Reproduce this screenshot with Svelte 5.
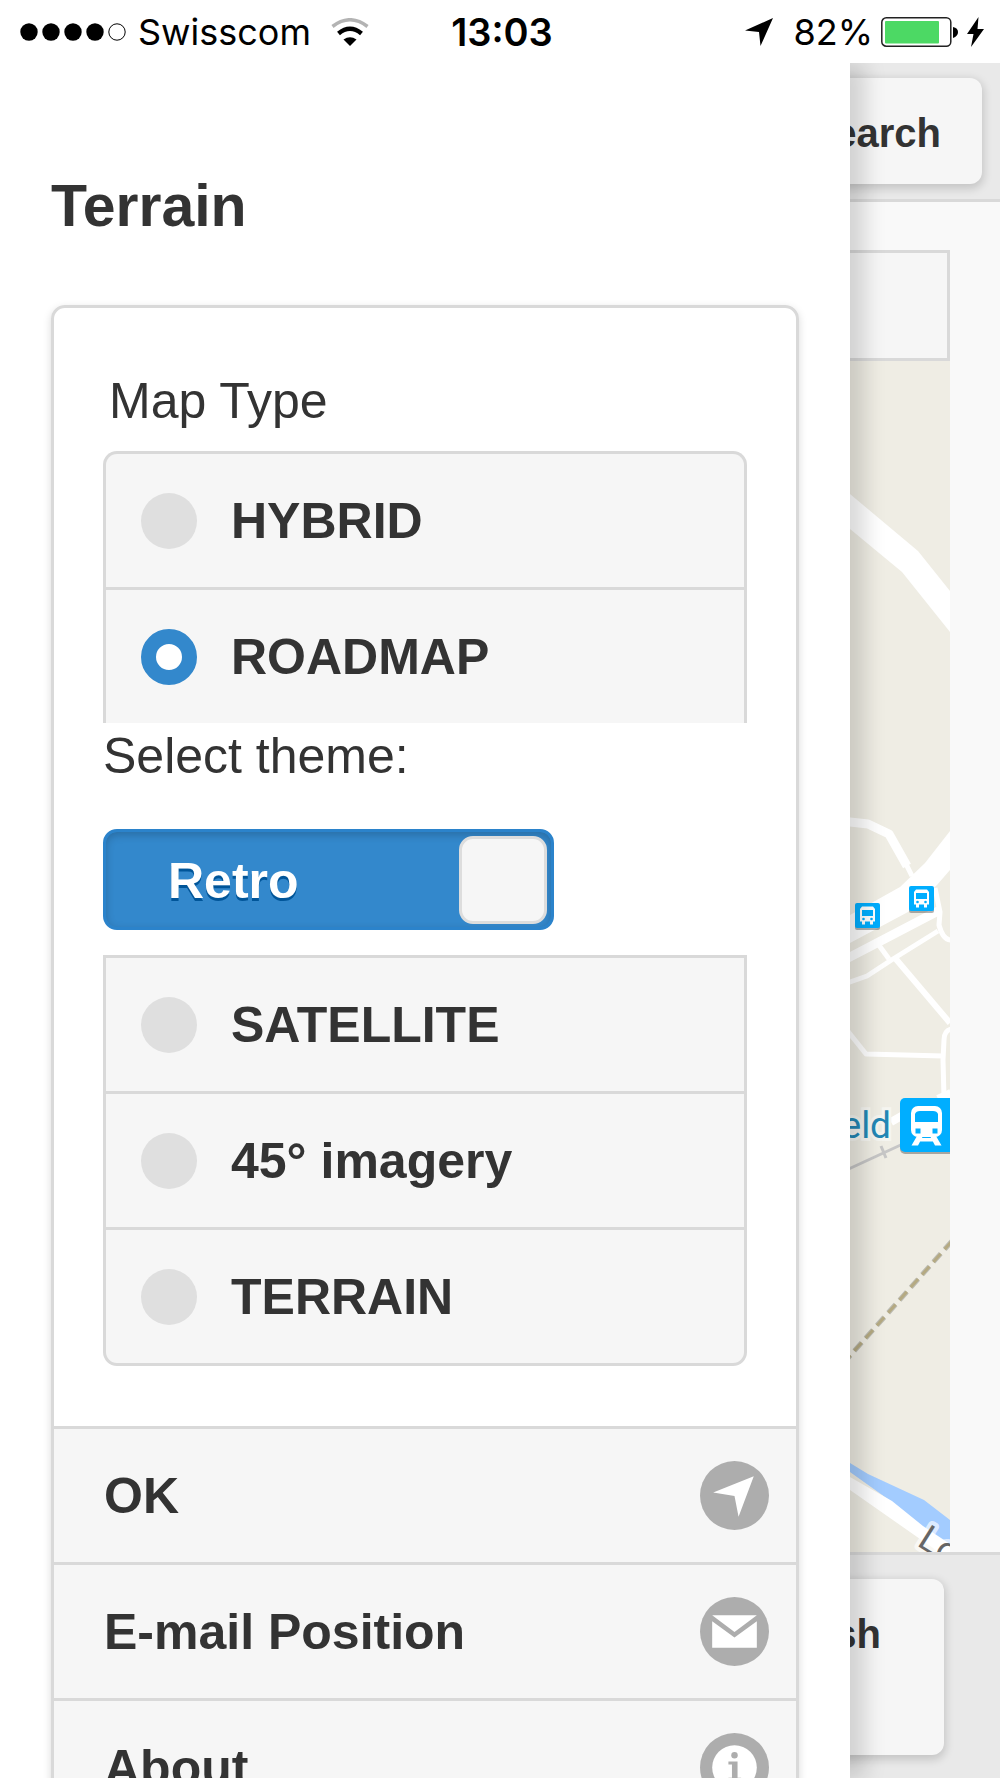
<script>
  let mapType = $state('ROADMAP');
  let retro = $state(true);

  const upperTypes = ['HYBRID', 'ROADMAP'];
  const lowerTypes = ['SATELLITE', '45° imagery', 'TERRAIN'];
  const actions = [
    { label: 'OK', icon: 'navigation' },
    { label: 'E-mail Position', icon: 'mail' },
    { label: 'About', icon: 'info' }
  ];
  const signal = [true, true, true, true, false];
  const busStops = [
    { x: 855, y: 903 },
    { x: 909, y: 886 }
  ];
</script>

{#snippet option(name)}
  <label class="option">
    <input type="radio" name="map-type" value={name} bind:group={mapType} />
    <span>{name}</span>
  </label>
{/snippet}

<div class="app">
  <header class="status">
    <div class="status-left">
      <svg class="dots" viewBox="0 0 106 18" role="img" aria-label="Signal strength">
        {#each signal as on, i}
          <circle cx={9 + i * 22} cy="9" r={on ? 8.7 : 8.2} fill={on ? '#000' : 'none'} stroke={on ? 'none' : '#000'} />
        {/each}
      </svg>
      <span>Swisscom</span>
      <svg class="wifi" viewBox="0 0 38 28" role="img" aria-label="Wi-Fi">
        <path d="M1.500 8.500Q19 -5 36.500 8.500" fill="none" stroke="#b3b3b3" stroke-width="3.500" />
        <path d="M7.500 15.500Q19 6 30.500 15.500" fill="none" stroke="#000" stroke-width="4.500" />
        <path d="M12.500 21.500Q19 17 25.500 21.500L19 28Z" />
      </svg>
    </div>
    <time>13:03</time>
    <div class="status-right">
      <svg class="arrow" viewBox="0 0 28 28" aria-hidden="true"><path d="M28 0 15.500 28 14 14 0 12.500Z" /></svg>
      <span>82%</span>
      <svg class="battery" viewBox="0 0 78 30" role="img" aria-label="Battery charging">
        <rect x=".8" y=".8" width="69" height="28.400" rx="4.500" fill="#fff" stroke="#222" stroke-width="1.500" />
        <rect x="4" y="4" width="54" height="22.500" rx="1" fill="#4cd964" />
        <path d="M72 10q5 1 5 5t-5 6z" />
      </svg>
      <svg class="bolt" viewBox="0 0 17 30" aria-hidden="true"><path d="M11.500 0 0 17h6.500L4 30 17 12H10.500Z" /></svg>
    </div>
  </header>

  <div class="stage">
    <div class="page">
      <div class="toolbar">
        <button class="btn search">Search</button>
      </div>
      <main class="content">
        <div class="map-head"></div>
        <svg class="map" viewBox="50 361 900 1192" preserveAspectRatio="xMaxYMin slice" role="img" aria-label="Map">
          <rect x="50" y="361" width="900" height="1192" fill="#efede4" />
          <path fill="#fff" d="M800 452 850 494 918 551 950 591V632L902 572 850 529 800 488Z" />
          <path fill="#fff" d="M950 831 925 863 900 887 850 915 800 940V968L850 943 908 912 937 885 950 870Z" />
          <g fill="none" stroke="#fff" stroke-width="5" stroke-linejoin="round">
            <path stroke-width="9" d="M840 822H850L868 824 889 834 907 866" />
            <path d="M905 862 912 876" />
            <path stroke-width="9" d="M840 962 850 957 896 933 940 910" />
            <path d="M840 986 850 982 867 976 893 959 938 931" />
            <path d="M878 944 889 959" />
            <path stroke-width="6" d="M895 958 950 1023" />
            <path d="M935 888 940 912 939 925Q943 940 951 940" />
            <path d="M840 1021 850 1034 866 1054 943 1056" />
            <path d="M951 1029Q944 1031 944 1040L943 1060 944 1098" />
            <path stroke-width="8" d="M891 1122 905 1114M938 1099 951 1093" />
          </g>
          <path d="M840 1173 905 1143M881 1146 886 1158" fill="none" stroke="#c6c6c6" stroke-width="3" />
          {#each busStops as stop}
            <g transform="translate({stop.x} {stop.y})">
              <rect y="2" width="25" height="25" rx="2" fill="#000" opacity=".3" />
              <rect width="25" height="25" rx="2" fill="#00aeff" />
              <path fill="#fff" d="M7 3.500H18L20 6V18.500H18V21.500H15V18.500H10V21.500H7V18.500H5V6Z" />
              <rect x="7" y="7" width="11" height="6" fill="#00aeff" />
              <circle cx="8.500" cy="16" r="1.300" fill="#00aeff" />
              <circle cx="16.500" cy="16" r="1.300" fill="#00aeff" />
            </g>
          {/each}
          <text class="station" x="891" y="1138" text-anchor="end">Steinfeld</text>
          <g>
            <rect x="900" y="1101" width="56" height="53" rx="5" fill="#000" opacity=".3" />
            <rect x="900" y="1098" width="56" height="54" rx="5" fill="#00aeff" />
            <rect x="911" y="1106" width="31" height="31" rx="7" fill="#fff" />
            <path d="M917 1136H923L918 1145.500H911.500ZM930 1136H936L941.500 1145.500H935ZM916 1138H937V1141.500H916Z" fill="#fff" />
            <path d="M915 1122V1114Q916 1111 920 1111H933Q937 1111 938 1114V1122Z" fill="#00aeff" />
            <path d="M915.500 1128.500h5v5h-5zM932.500 1128.500h5v5h-5z" fill="#00aeff" />
          </g>
          <path d="M952 1241 840 1367" fill="none" stroke="#bcbcb4" stroke-width="5" stroke-dasharray="11 6" />
          <path d="M952 1241 840 1367" fill="none" stroke="#b5aa82" stroke-width="3" stroke-dasharray="11 6" />
          <path fill="#a3ccff" d="M840 1455 850 1463 868 1474 924 1500 950 1520V1550L923 1530 892 1502 850 1472Z" />
          <path fill="#fff" d="M840 1471 850 1477 892 1501 923 1526 950 1544V1560L840 1483Z" />
          <text class="street" transform="translate(916 1545) rotate(32)">Lo</text>
        </svg>
      </main>
      <footer class="footer">
        <button class="btn refresh">Refresh</button>
      </footer>
    </div>

    <aside class="panel">
      <h2>Terrain</h2>
      <section class="card">
        <form class="card-body">
          <fieldset>
            <legend>Map Type</legend>
            <div class="options first">
              {#each upperTypes as name}{@render option(name)}{/each}
            </div>
            <label class="theme-label" for="theme">Select theme:</label>
            <div class="toggle">
              <input id="theme" type="checkbox" role="switch" bind:checked={retro} />
              <span class="toggle-text">Retro</span>
              <span class="handle"></span>
            </div>
            <div class="options last">
              {#each lowerTypes as name}{@render option(name)}{/each}
            </div>
          </fieldset>
        </form>
        {#each actions as action}
          <button class="action">
            <span>{action.label}</span>
            <svg viewBox="0 0 68 68" aria-hidden="true">
              <circle cx="34" cy="34" r="34" fill="#adadad" />
              {#if action.icon === 'navigation'}
                <path fill="#fff" d="M53 15 38 55 34 34.500 13 31Z" />
              {:else if action.icon === 'mail'}
                <path fill="#fff" d="M12 18H56L34 34.500ZM12 24 34 40 56 24V50H12Z" />
              {:else}
                <circle cx="34" cy="34" r="22" fill="#fff" />
                <circle cx="34" cy="22" r="3.200" fill="#adadad" />
                <path fill="#adadad" d="M28 28h9v16h3.500v3H28v-3h3.500V31H28z" />
              {/if}
            </svg>
          </button>
        {/each}
      </section>
    </aside>
  </div>
</div>

<style>
  :global(body) {
    margin: 0;
  }
  .app {
    display: flex;
    flex-direction: column;
    height: 100vh;
    overflow: hidden;
    background: #fff;
    color: #333;
    font: 50px/56px 'Liberation Sans', Arial, sans-serif;
  }
  .app :global(*) {
    box-sizing: border-box;
  }
  svg {
    display: block;
    flex: none;
  }
  button {
    font: inherit;
    color: inherit;
    cursor: pointer;
  }

  .status {
    display: grid;
    grid-template-columns: 1fr auto 1fr;
    align-items: center;
    height: 63px;
    flex: none;
    padding: 0 16px 0 20px;
    color: #000;
    font: 36px/40px Inter, sans-serif;
  }
  .status-left,
  .status-right {
    display: flex;
    align-items: center;
  }
  .status-right {
    justify-content: flex-end;
    gap: 8px;
  }
  .status time {
    font-size: 38px;
    font-weight: 600;
  }
  .dots {
    width: 106px;
    height: 18px;
    margin-right: 12px;
  }
  .wifi {
    width: 38px;
    height: 28px;
    margin-left: 20px;
  }
  .arrow {
    width: 28px;
    height: 28px;
    margin-right: 12px;
  }
  .battery {
    width: 78px;
    height: 30px;
  }
  .bolt {
    width: 17px;
    height: 30px;
  }

  .stage {
    position: relative;
    flex: 1;
    min-height: 0;
    overflow: hidden;
  }
  .page {
    display: flex;
    flex-direction: column;
    height: 100%;
    background: #f9f9f9;
  }
  .toolbar {
    display: flex;
    justify-content: flex-end;
    padding: 15px 18px;
    background: #e9e9e9;
    border-bottom: 3px solid #d9d9d9;
  }
  .btn {
    background: #f6f6f6;
    border: 0;
    border-radius: 12px;
    box-shadow: 0 3px 8px 2px rgba(0, 0, 0, 0.15);
    font-size: 40px;
    font-weight: 700;
    line-height: 46px;
  }
  .search {
    padding: 32px 41px 28px;
  }
  .content {
    display: flex;
    flex-direction: column;
    flex: 1;
    min-height: 0;
    padding: 48px 50px 0;
  }
  .map-head {
    height: 111px;
    flex: none;
    background: #f6f6f6;
    border: 3px solid #d9d9d9;
  }
  .map {
    width: 100%;
    flex: 1;
    min-height: 0;
  }
  .station {
    font: 37px Roboto, sans-serif;
    fill: #2387b5;
    stroke: #f5f5f0;
    stroke-width: 6px;
    paint-order: stroke;
  }
  .street {
    font: 36px Roboto, sans-serif;
    fill: #666;
    stroke: rgba(255, 255, 255, 0.65);
    stroke-width: 8px;
    stroke-linejoin: round;
    paint-order: stroke;
  }
  .footer {
    display: flex;
    justify-content: flex-end;
    padding: 24px 56px 23px;
    background: #e9e9e9;
    border-top: 3px solid #d9d9d9;
  }
  .refresh {
    padding: 32px 63px 98px;
  }

  .panel {
    position: absolute;
    inset: 0 15% 0 0;
    padding: 108px 51px 0;
    overflow: hidden;
    background: #fff;
    box-shadow: 15px 0 20px rgba(0, 0, 0, 0.15);
  }
  h2 {
    margin: 0 0 64px;
    font-size: 59px;
    line-height: 70px;
  }
  .card {
    border: 3px solid #d9d9d9;
    border-radius: 14px;
    box-shadow: 0 3px 8px rgba(0, 0, 0, 0.15);
  }
  .card-body {
    padding: 65px 49px 60px;
  }
  fieldset {
    min-width: 0;
    margin: 0;
    padding: 0;
    border: 0;
  }
  legend {
    padding: 0 6px;
    margin-bottom: 22px;
  }
  .options {
    background: #f6f6f6;
    border: 0 solid #d9d9d9;
    border-width: 0 3px;
    overflow: hidden;
  }
  .options.first {
    border-radius: 14px 14px 0 0;
    border-top-width: 3px;
  }
  .options.last {
    border-radius: 0 0 14px 14px;
    border-width: 3px;
  }
  .option {
    display: flex;
    align-items: center;
    gap: 34px;
    height: 133px;
    padding-left: 35px;
    font-weight: 700;
  }
  .option + :global(.option) {
    height: 136px;
    border-top: 3px solid #d9d9d9;
  }
  .option input {
    appearance: none;
    width: 56px;
    height: 56px;
    margin: 0;
    border-radius: 50%;
    background: #dfdfdf;
  }
  .option input:checked {
    background: #fff;
    border: 15px solid #38c;
  }
  .theme-label {
    display: block;
    margin: 5px 0 45px;
  }
  .toggle {
    position: relative;
    display: flex;
    align-items: center;
    justify-content: space-between;
    width: 70%;
    height: 101px;
    margin-bottom: 25px;
    padding: 0 6px 0 62px;
    border: 3px solid #2b83cb;
    border-radius: 14px;
    background: #38c;
    box-shadow: inset 0 3px 8px rgba(0, 0, 0, 0.2);
    color: #fff;
    font-weight: 700;
    text-shadow: 0 3px 0 #059;
  }
  .toggle input {
    position: absolute;
    inset: 0;
    width: 100%;
    height: 100%;
    margin: 0;
    opacity: 0;
  }
  .toggle-text {
    padding-top: 3px;
  }
  .handle {
    width: 88px;
    height: 88px;
    margin-right: -2px;
    border: 3px solid #ddd;
    border-radius: 14px;
    background: #f6f6f6;
  }
  .action {
    display: flex;
    align-items: center;
    justify-content: space-between;
    width: 100%;
    height: 136px;
    padding: 0 27px 0 50px;
    border: 0;
    border-top: 3px solid #d9d9d9;
    background: #f6f6f6;
    font-weight: 700;
  }
  .action svg {
    width: 69px;
    height: 69px;
  }
</style>
